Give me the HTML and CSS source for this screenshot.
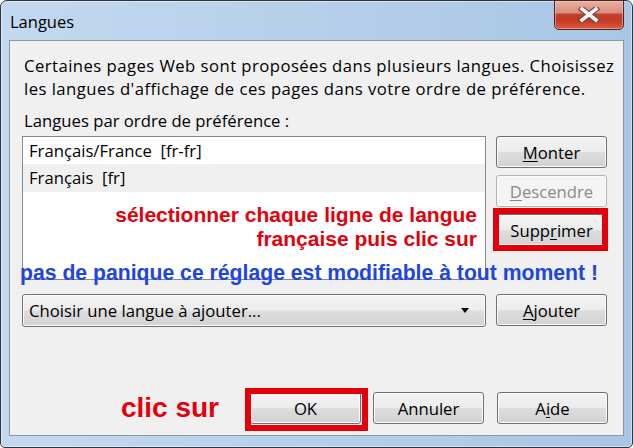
FILE: index.html
```html
<!DOCTYPE html>
<html lang="fr">
<head>
<meta charset="utf-8">
<title>Langues</title>
<link rel="stylesheet" href="styles.css">
</head>
<body>
<div class="window">
  <div class="titlebar">
    <span class="title">Langues</span>
    <div class="close">
      <svg width="22" height="15" viewBox="0 0 22 15">
        <path d="M4 2 L18 13 M18 2 L4 13" stroke="#6b4a45" stroke-width="6" stroke-linecap="square" fill="none"/>
        <path d="M4 2 L18 13 M18 2 L4 13" stroke="#f4f4f4" stroke-width="3.6" stroke-linecap="square" fill="none"/>
      </svg>
    </div>
  </div>
  <div class="content">
    <p class="intro">Certaines pages Web sont proposées dans plusieurs langues. Choisissez<br>les langues d'affichage de ces pages dans votre ordre de préférence.</p>
    <p class="label">Langues par ordre de préférence :</p>
    <div class="main-row">
      <div class="listbox">
        <div class="row">Français/France&nbsp; [fr-fr]</div>
        <div class="row row-alt">Français&nbsp; [fr]</div>
        <p class="note-red">sélectionner chaque ligne de langue<br>française puis clic sur</p>
      </div>
      <div class="side-buttons">
        <button class="btn"><u>M</u>onter</button>
        <button class="btn btn-descendre" disabled><u>D</u>escendre</button>
        <span class="highlight hl-supp"><button class="btn">Supp<u>r</u>imer</button></span>
      </div>
    </div>
    <p class="note-blue">pas de panique ce réglage est modifiable à tout moment !</p>
    <div class="add-row">
      <div class="select"><span>Choisir une langue à ajouter...</span><span class="arrow"></span></div>
      <button class="btn"><u>A</u>jouter</button>
    </div>
    <div class="footer">
      <span class="note-click">clic sur</span>
      <span class="highlight hl-ok"><button class="btn">OK</button></span>
      <button class="btn">Annuler</button>
      <button class="btn btn-aide">A<u>i</u>de</button>
    </div>
  </div>
</div>
</body>
</html>
```
FILE: styles.css
```css
* { box-sizing: border-box; }
html, body { margin: 0; padding: 0; }
body {
  width: 633px;
  height: 448px;
  overflow: hidden;
  background: #ffffff;
  font-family: "Open Sans", "Noto Sans", sans-serif;
  font-size: 16.7px;
  color: #000;
}
.window {
  width: 633px;
  height: 448px;
  border: 1px solid #2d3640;
  border-radius: 7px 7px 5px 5px;
  background: linear-gradient(90deg, #c3d9ef 0%, #b7d0ea 45%, #aac6e5 100%);
  box-shadow: inset 0 0 0 1px rgba(255,255,255,0.45);
  padding: 0 8px 11px 8px;
  display: flex;
  flex-direction: column;
}
.titlebar {
  height: 39px;
  display: flex;
  justify-content: space-between;
  align-items: flex-start;
}
.title {
  font-size: 16.5px;
  line-height: 22px;
  padding-top: 10px;
  padding-left: 1px;
}
.close {
  width: 70px;
  height: 30px;
  margin-top: -1px;
  border: 1px solid #4a2620;
  border-radius: 0 0 5px 5px;
  background: linear-gradient(180deg, #e8b0a4 0%, #d98c7c 42%, #c0412c 48%, #c43a24 70%, #de5a3e 100%);
  box-shadow: inset 0 0 0 1px rgba(255,200,190,0.55);
  display: flex;
  align-items: center;
  justify-content: center;
}
.close svg { display: block; margin-top: -2px; }
.content {
  position: relative;
  flex: 1;
  border: 1px solid #8896a5;
  background: #f0f0f0;
  padding: 13px 15px 11px 12px;
  display: flex;
  flex-direction: column;
}
.intro {
  margin: 0;
  padding-left: 2px;
  line-height: 23px;
  letter-spacing: 0.45px;
  white-space: nowrap;
}
.label {
  margin: 9px 0 0 0;
  padding-left: 2px;
  line-height: 23px;
}
.main-row {
  margin-top: 4px;
  display: flex;
  gap: 10px;
}
.listbox {
  width: 464px;
  height: 144px;
  border: 1px solid #828790;
  background: #ffffff;
}
.row {
  height: 27px;
  line-height: 27px;
  padding-left: 6px;
}
.row-alt {
  height: 28px;
  line-height: 28px;
  background: #f0f0f0;
}
.note-red {
  margin: 11px 0 0 0;
  padding-right: 8px;
  text-align: right;
  font-family: "Liberation Sans", Arial, sans-serif;
  font-weight: bold;
  font-size: 21px;
  line-height: 24px;
  color: #e3000b;
  white-space: nowrap;
}
.side-buttons {
  width: 111px;
  display: flex;
  flex-direction: column;
  gap: 7px;
}
.btn {
  width: 111px;
  height: 32px;
  padding: 0;
  font-family: "Open Sans", "Noto Sans", sans-serif;
  font-size: 16.7px;
  color: #000;
  border: 1px solid #707070;
  border-radius: 3px;
  background: linear-gradient(180deg, #f3f3f3 0%, #ececec 48%, #dddddd 52%, #d2d2d2 100%);
  box-shadow: inset 0 0 0 1px #fbfbfb;
}
.btn u { text-underline-offset: 2px; text-decoration-thickness: 1px; }
.btn-descendre {
  color: #8a8a8a;
  border-color: #b4b4b4;
  background: #f4f4f4;
}
.highlight {
  position: relative;
  display: flex;
}
.highlight::after {
  content: "";
  position: absolute;
  border: 6px solid #e3000b;
  pointer-events: none;
}
.hl-supp::after { top: -6px; left: -3px; right: -1px; bottom: -5px; }
.hl-ok::after { top: -4px; left: -5px; right: -7px; bottom: -7px; }
.note-blue {
  position: absolute;
  left: 10px;
  top: 220px;
  margin: 0;
  font-family: "Liberation Sans", Arial, sans-serif;
  font-weight: bold;
  font-size: 21.2px;
  line-height: 24px;
  color: #1d45e2;
  white-space: nowrap;
}
.add-row {
  margin-top: 14px;
  display: flex;
  gap: 10px;
  align-items: flex-start;
}
.select {
  width: 464px;
  height: 33px;
  border: 1px solid #707070;
  border-radius: 3px;
  background: linear-gradient(180deg, #f3f3f3 0%, #ececec 48%, #dddddd 52%, #d2d2d2 100%);
  box-shadow: inset 0 0 0 1px #fbfbfb;
  display: flex;
  align-items: center;
  justify-content: space-between;
  padding: 0 16px 0 6px;
}
.arrow {
  width: 0;
  height: 0;
  border-left: 4px solid transparent;
  border-right: 4px solid transparent;
  border-top: 5px solid #000;
}
.footer {
  margin-top: auto;
  display: flex;
  align-items: center;
  justify-content: flex-end;
  gap: 12px;
}
.note-click {
  margin-right: 19px;
  font-family: "Liberation Sans", Arial, sans-serif;
  font-weight: bold;
  font-size: 28px;
  line-height: 32px;
  color: #e3000b;
}
.btn-aide { margin-left: 1px; }
```
